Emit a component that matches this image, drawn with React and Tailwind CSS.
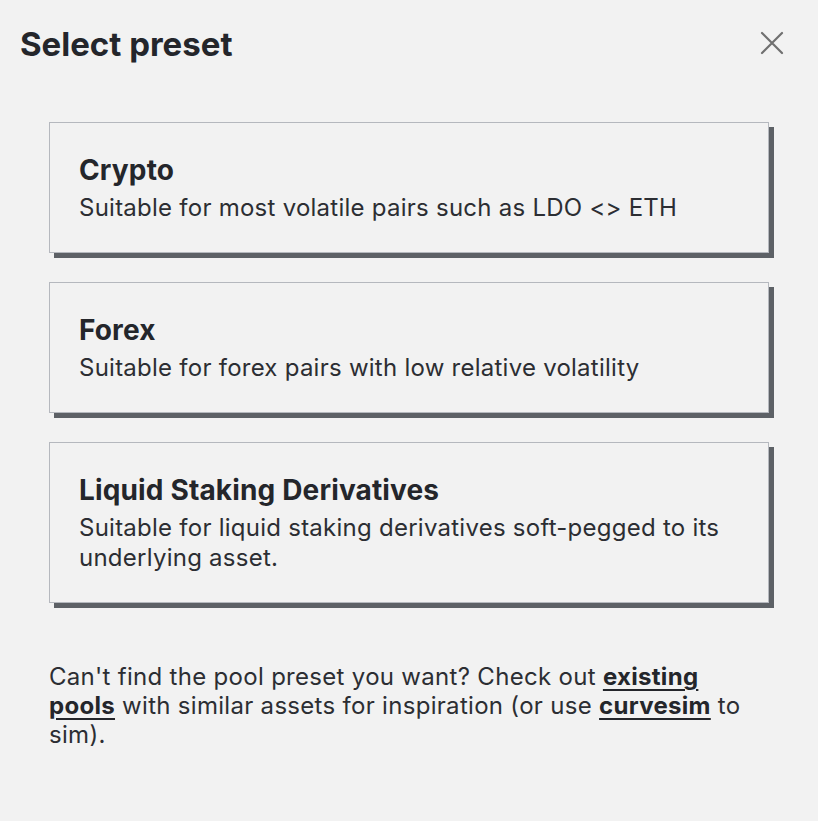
import React from "react";

const presets = [
  {
    name: "Crypto",
    text: "Suitable for most volatile pairs such as LDO <> ETH",
  },
  {
    name: "Forex",
    text: "Suitable for forex pairs with low relative volatility",
  },
  {
    name: "Liquid Staking Derivatives",
    text: "Suitable for liquid staking derivatives soft-pegged to its underlying asset.",
  },
];

function PresetCard({ name, text }) {
  return (
    <button
      type="button"
      className="
        w-full text-left
        bg-[#f2f2f2]
        border border-[#b5b8be]
        shadow-[5px_5px_0_0_#5d6166]
        px-[29px] pt-[24px] pb-[29px]
      "
    >
      <div className="text-[28px] leading-[46px] font-bold tracking-[0.15px] text-[#24262b]">
        {name}
      </div>
      <div className="text-[24px] leading-[30px] tracking-[0.25px] text-[#2c2e33]">
        {text}
      </div>
    </button>
  );
}

export default function App() {
  return (
    <div
      className="min-h-[821px] w-[818px] bg-[#f2f2f2] text-[#2c2e33]"
      style={{ fontFamily: "Inter, 'Noto Sans', sans-serif" }}
    >
      {/* Header */}
      <div className="flex items-start justify-between pl-[20px] pr-[34px] pt-[24px]">
        <h1 className="text-[33px] leading-[40px] font-bold text-[#24262b]">
          Select preset
        </h1>
        <button type="button" className="mt-[7px] text-[#707070]" aria-label="Close">
          <svg width="24" height="24" viewBox="0 0 24 24" fill="none">
            <path
              d="M2 2L22 22M22 2L2 22"
              stroke="currentColor"
              strokeWidth="2.2"
              strokeLinecap="round"
            />
          </svg>
        </button>
      </div>

      {/* Presets */}
      <div className="flex flex-col gap-[29px] pl-[49px] pr-[49px] pt-[58px]">
        {presets.map((p) => (
          <PresetCard key={p.name} name={p.name} text={p.text} />
        ))}
      </div>

      {/* Footer note */}
      <p className="mt-[59px] ml-[49px] w-[706px] text-[24px] leading-[29px] tracking-[0.3px] text-[#2c2e33]">
        Can't find the pool preset you want? Check out{" "}
        <a href="#" className="font-bold underline decoration-2 underline-offset-[4px] text-[#24262b]">
          existing pools
        </a>{" "}
        with similar assets for inspiration (or use{" "}
        <a href="#" className="font-bold underline decoration-2 underline-offset-[4px] text-[#24262b]">
          curvesim
        </a>{" "}
        to sim).
      </p>
    </div>
  );
}
